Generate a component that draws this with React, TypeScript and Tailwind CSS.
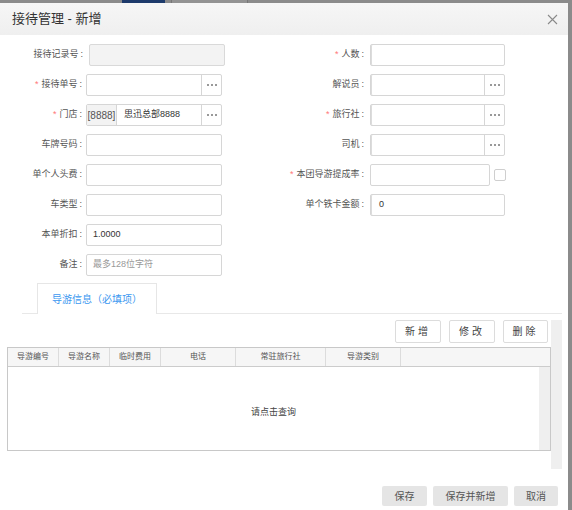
import type { ReactNode } from 'react';

// 接待管理 - 新增 dialog

type Side = 'left' | 'right';

const Dots = () => (
  <div className="flex h-full w-[20px] shrink-0 items-center justify-center gap-[2px] border-l border-[#d6d6d6]">
    <span className="h-[2px] w-[2px] rounded-full bg-[#777]" />
    <span className="h-[2px] w-[2px] rounded-full bg-[#777]" />
    <span className="h-[2px] w-[2px] rounded-full bg-[#777]" />
  </div>
);

const Row = ({
  label,
  required,
  side,
  children,
}: {
  label: string;
  required?: boolean;
  side: Side;
  children: ReactNode;
}) => (
  <div className="flex h-[22px] items-center">
    <label
      className={
        side === 'left'
          ? 'flex w-[82px] shrink-0 justify-end whitespace-nowrap text-[9px] text-[#555]'
          : 'flex w-[74px] shrink-0 justify-end whitespace-nowrap text-[9px] text-[#555]'
      }
    >
      {required && <span className="mr-[3px] text-[#f77]">*</span>}
      {label}
      <span className="ml-[2px]">:</span>
    </label>
    {children}
  </div>
);

const Box = ({
  side,
  dots,
  disabled,
  children,
}: {
  side: Side;
  dots?: boolean;
  disabled?: boolean;
  children?: ReactNode;
}) => (
  <div
    className={
      side === 'left'
        ? `ml-[4px] flex h-[22px] w-[136px] items-center rounded-[2px] border border-[#d6d6d6] ${disabled ? 'bg-[#f3f3f3]' : 'bg-white'}`
        : 'ml-[6px] flex h-[22px] w-[135px] items-center rounded-[2px] border border-[#d6d6d6] bg-white shadow-[inset_1px_0_0_#dcdcdc]'
    }
  >
    <div className="flex-1 truncate pl-[6px] text-[9px] text-[#333]">{children}</div>
    {dots && <Dots />}
  </div>
);

const GUIDE_COLS = [
  { title: '导游编号', w: 'w-[51px]' },
  { title: '导游名称', w: 'w-[51px]' },
  { title: '临时费用', w: 'w-[51px]' },
  { title: '电话', w: 'w-[75px]' },
  { title: '常驻旅行社', w: 'w-[90px]' },
  { title: '导游类别', w: 'w-[75px]' },
];

export default function App() {
  return (
    <div className="h-[510px] w-[572px] overflow-hidden bg-[#8b8b8b] font-['Liberation_Sans','Noto_Sans_CJK_SC',sans-serif]">
      {/* page behind the dialog */}
      <div className="flex h-[3px]">
        <div className="ml-[122px] w-[43px] bg-[#1d3a6b]" />
        <div className="ml-[6px] w-[77px] border-x border-[#777] bg-[#939393]" />
      </div>

      <div className="flex h-[507px] w-[568px] flex-col bg-white">
        {/* header */}
        <div className="flex h-[32px] shrink-0 items-center justify-between bg-gradient-to-b from-[#f6f6f6] to-[#efefef] pl-[12px] pr-[10px]">
          <span className="text-[13px] text-[#333]">接待管理 - 新增</span>
          <svg width="11" height="11" viewBox="0 0 11 11" className="mt-[1px]">
            <path d="M1 1L10 10M10 1L1 10" stroke="#8a8a8a" strokeWidth="1.1" />
          </svg>
        </div>

        {/* form */}
        <div className="flex pt-[9px]">
          <div className="flex w-[290px] flex-col gap-[8px]">
            <div className="flex h-[22px] items-center">
              <label className="flex w-[83px] shrink-0 justify-end whitespace-nowrap text-[9px] text-[#555]">
                接待记录号<span className="ml-[2px]">:</span>
              </label>
              <div className="ml-[6px] h-[22px] w-[136px] rounded-[2px] border border-[#d9d9d9] bg-[#f3f3f3]" />
            </div>
            <Row label="接待单号" required side="left">
              <Box side="left" dots />
            </Row>
            <Row label="门店" required side="left">
              <div className="ml-[4px] flex h-[22px] w-[136px] items-center rounded-[2px] border border-[#d6d6d6] bg-white">
                <div className="flex h-full w-[30px] shrink-0 items-center justify-center border-r border-[#d6d6d6] bg-[#f3f3f3] text-[10px] text-[#555]">
                  [8888]
                </div>
                <div className="flex-1 truncate pl-[7px] text-[9px] text-[#333]">思迅总部8888</div>
                <Dots />
              </div>
            </Row>
            <Row label="车牌号码" side="left">
              <Box side="left" />
            </Row>
            <Row label="单个人头费" side="left">
              <Box side="left" />
            </Row>
            <Row label="车类型" side="left">
              <Box side="left" />
            </Row>
            <Row label="本单折扣" side="left">
              <Box side="left">1.0000</Box>
            </Row>
            <Row label="备注" side="left">
              <Box side="left">
                <span className="text-[#999]">最多128位字符</span>
              </Box>
            </Row>
          </div>

          <div className="flex flex-1 flex-col gap-[8px]">
            <Row label="人数" required side="right">
              <Box side="right" />
            </Row>
            <Row label="解说员" side="right">
              <Box side="right" dots />
            </Row>
            <Row label="旅行社" required side="right">
              <Box side="right" dots />
            </Row>
            <Row label="司机" side="right">
              <Box side="right" dots />
            </Row>
            <Row label="本团导游提成率" required side="right">
              <div className="ml-[6px] h-[22px] w-[120px] rounded-[2px] border border-[#d6d6d6] bg-white" />
              <div className="ml-[4px] h-[12px] w-[12px] rounded-[2px] border border-[#cfcfcf] bg-white" />
            </Row>
            <Row label="单个铁卡金额" side="right">
              <Box side="right">
                <span className="pl-[2px]">0</span>
              </Box>
            </Row>
          </div>
        </div>

        {/* tabs */}
        <div className="ml-[22px] mr-[6px] mt-[7px] flex h-[31px] border-b border-[#e8e8e8] pl-[15px]">
          <div className="-mb-px flex h-[31px] w-[120px] items-center justify-center border-x border-t border-[#e6e6e6] bg-white text-[10px] text-[#3c98f0]">
            导游信息（必填项）
          </div>
        </div>

        <div className="mt-[6px] flex">
          <div className="flex w-[551px] flex-col">
            <div className="flex h-[23px] justify-end gap-[8px] pr-[3px]">
              <button className="w-[46px] rounded-[2px] border border-[#dcdcdc] bg-white text-[10px] tracking-[3px] text-[#444]">
                新增
              </button>
              <button className="w-[46px] rounded-[2px] border border-[#dcdcdc] bg-white text-[10px] tracking-[3px] text-[#444]">
                修改
              </button>
              <button className="w-[45px] rounded-[2px] border border-[#dcdcdc] bg-white text-[10px] tracking-[3px] text-[#444]">
                删除
              </button>
            </div>

            {/* guide table */}
            <div className="ml-[7px] mt-[4px] flex h-[104px] flex-col border border-[#c8c8c8] font-['Liberation_Serif','Noto_Sans_CJK_SC',serif]">
              <div className="flex h-[19px] shrink-0 border-b border-[#cccccc] bg-[#f6f6f6]">
                {GUIDE_COLS.map((c) => (
                  <div
                    key={c.title}
                    className={`${c.w} flex shrink-0 items-center justify-center border-r border-[#dcdcdc] text-[8px] text-[#555]`}
                  >
                    {c.title}
                  </div>
                ))}
              </div>
              <div className="flex flex-1">
                <div className="flex flex-1 items-center justify-center pt-[8px] text-[9px] text-[#444]">
                  请点击查询
                </div>
                <div className="w-[11px] bg-[#efefef]" />
              </div>
            </div>
          </div>
          <div className="h-[149px] w-[11px] bg-[#efefef]" />
        </div>

        {/* footer */}
        <div className="mt-[17px] flex justify-end gap-[6px] pr-[10px]">
          <button className="h-[20px] w-[45px] rounded-[2px] bg-[#e5e5e5] text-[10px] text-[#555]">保存</button>
          <button className="h-[20px] w-[75px] rounded-[2px] bg-[#e5e5e5] text-[10px] text-[#555]">保存并新增</button>
          <button className="h-[20px] w-[44px] rounded-[2px] bg-[#e5e5e5] text-[10px] text-[#555]">取消</button>
        </div>
      </div>
    </div>
  );
}
